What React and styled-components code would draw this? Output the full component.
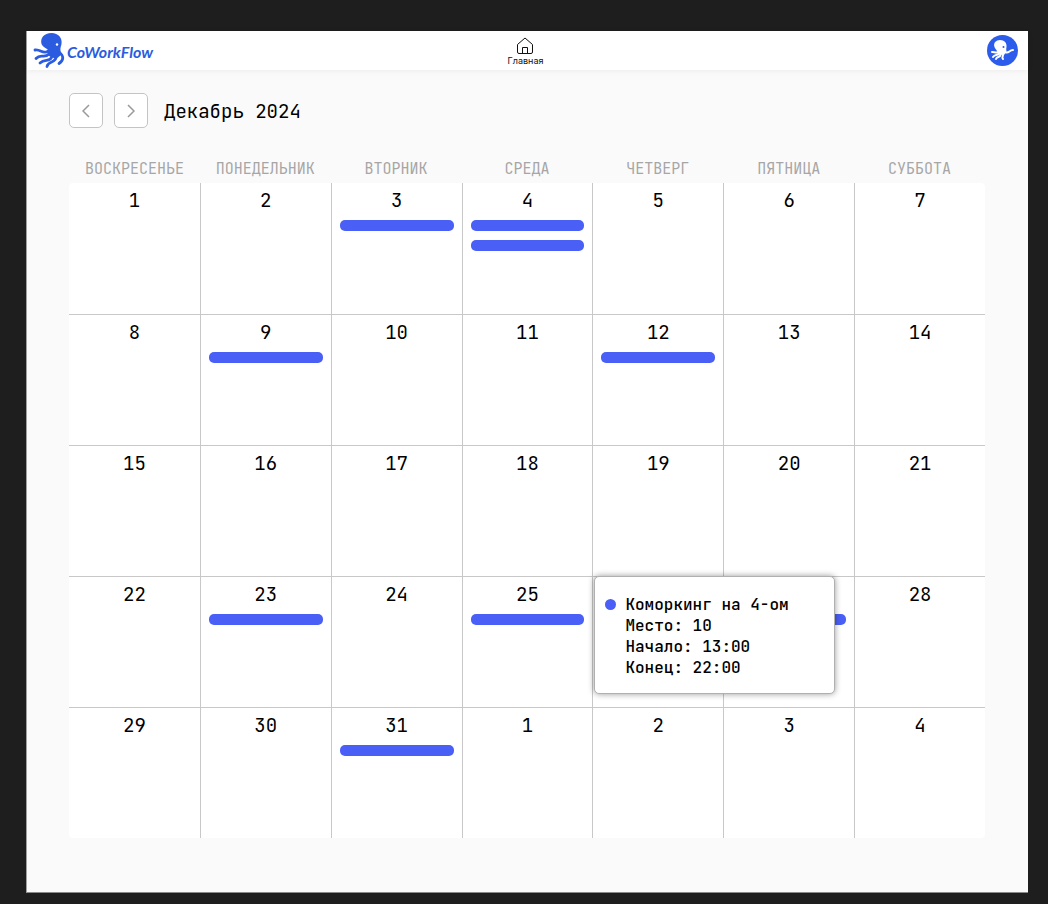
import React from "react";
import styled, { createGlobalStyle } from "styled-components";

const BLUE = "#2b5ce0";
const EVENT = "#4a5ff5";
const MONO = `"JetBrains Mono", "DejaVu Sans Mono", monospace`;

const GlobalStyle = createGlobalStyle`
  *, *::before, *::after { box-sizing: border-box; }
  body { margin: 0; background: #1e1e1e; color: #000; font-family: ${MONO}; }
`;

const Desktop = styled.div`
  min-height: 100vh;
  padding: 31px 20px 12px 26px;
  display: flex;
`;

const Page = styled.div`
  flex: 1;
  min-width: 0;
  display: flex;
  flex-direction: column;
  background: #fafafa;
  border-left: 1px solid #a0a0a0;
  border-bottom: 1px solid #8a8a8a;
`;

const Header = styled.header`
  height: 39px;
  display: grid;
  grid-template-columns: 1fr auto 1fr;
  align-items: center;
  padding: 0 10px 0 6px;
  background: #fff;
  box-shadow: 0 1px 6px rgba(0, 0, 0, 0.06);
`;

const Brand = styled.a`
  display: flex;
  align-items: center;
  gap: 2px;
  color: ${BLUE};
  text-decoration: none;
  font: italic 700 16px/20px Lato, sans-serif;
`;

const BrandName = styled.span`
  padding-top: 3px;
`;

const HomeLink = styled.a`
  display: flex;
  flex-direction: column;
  align-items: center;
  padding-top: 2px;
  color: #111;
  text-decoration: none;
  font: 400 9px/12px Inter, sans-serif;
`;

const Profile = styled.button`
  justify-self: end;
  width: 31px;
  height: 31px;
  padding: 0;
  display: grid;
  place-items: center;
  border: 0;
  border-radius: 50%;
  background: #2b5ceb;
  color: #fff;
`;

const Main = styled.main`
  padding: 23px 43px 54px 42px;
`;

const Toolbar = styled.div`
  display: flex;
  align-items: center;
  gap: 11px;
`;

const ArrowButton = styled.button`
  width: 34px;
  height: 35px;
  padding: 0;
  display: grid;
  place-items: center;
  border: 1px solid #c4c4c4;
  border-radius: 5px;
  background: #fff;
  color: #999;
`;

const Title = styled.h1`
  margin: 2px 0 0 5px;
  font-size: 19px;
  line-height: 24px;
  font-weight: 400;
`;

const Calendar = styled.table`
  width: 100%;
  margin-top: 26px;
  table-layout: fixed;
  border-collapse: separate;
  border-spacing: 0;
`;

const Weekday = styled.th`
  height: 29px;
  padding: 0;
  color: #a6a6a6;
  font-size: 15px;
  line-height: 20px;
  font-weight: 400;
  text-transform: uppercase;
`;

const Day = styled.td`
  position: relative;
  height: 131px;
  padding: 6px 8px;
  vertical-align: top;
  text-align: center;
  background: #fff;
  border-left: 1px solid #c8c8c8;
  border-top: 1px solid #c8c8c8;

  &:first-child { border-left: 0; }
  tr:first-child > & { border-top: 0; }
  tr:first-child > &:first-child { border-top-left-radius: 4px; }
  tr:first-child > &:last-child { border-top-right-radius: 4px; }
  tr:last-child > &:first-child { border-bottom-left-radius: 4px; }
  tr:last-child > &:last-child { border-bottom-right-radius: 4px; }
`;

const DayNumber = styled.div`
  font-size: 19px;
  line-height: 24px;
  visibility: ${({ $covered }) => ($covered ? "hidden" : "visible")};
`;

const Events = styled.div`
  display: flex;
  flex-direction: column;
  gap: 9px;
  padding-top: 7px;
`;

const EventBar = styled.button`
  width: 100%;
  height: 11px;
  padding: 0;
  border: 0;
  border-radius: 5px;
  background: ${EVENT};
`;

const Tooltip = styled.div`
  position: absolute;
  z-index: 2;
  top: -1px;
  left: 1px;
  width: 241px;
  padding: 17px 10px 15px;
  display: flex;
  gap: 9px;
  border: 1px solid #b0b0b0;
  border-radius: 5px;
  background: #fff;
  box-shadow: 0 0 6px rgba(0, 0, 0, 0.4);
  text-align: left;
  white-space: nowrap;
  font-size: 16px;
  line-height: 21px;
  font-weight: 500;
`;

const Dot = styled.span`
  flex: none;
  width: 11px;
  height: 11px;
  margin-top: 5px;
  border-radius: 50%;
  background: ${EVENT};
`;

const LogoOctopus = () => (
  <svg width="32" height="36" viewBox="0 0 32 36" fill="none" aria-hidden="true">
    <path
      fill="currentColor"
      d="M8.500 11C7 5 11 0 18.500 0c7 0 11 5 10 11-.3 2-1.500 4-1 6.500L28 22l-5 4-7-3-2-4c4-3-3-3-5.500-8Z"
    />
    <g stroke="currentColor" strokeWidth="2.800" strokeLinecap="round">
      <path d="M15 18c-5 4-7-2-13-1" />
      <path d="M16 21c-5 5-8-1-13 4.500" />
      <path d="M19 23c-2 7-7 2-12 7" />
      <path d="M23 24c0 6-8 4-9 9.500" />
      <path d="M26 19c5 4 5 8 0 11.500" />
    </g>
    <circle cx="24" cy="11.500" r="1.200" fill="#fff" />
  </svg>
);

const AvatarOctopus = () => (
  <svg width="31" height="31" viewBox="0 0 31 31" fill="none" aria-hidden="true">
    <path
      fill="currentColor"
      d="M7.500 12C6 8 9 5 13 5c4.500 0 7 3 6.500 7-.2 1.500-.5 2.500 0 4l-2 3.500h-5l-2.500-2c1-2-1.500-2.500-2.500-5.500Z"
    />
    <g stroke="currentColor" strokeWidth="2" strokeLinecap="round">
      <path d="M13 16c-3 3-5 1-8 1" />
      <path d="M13 18c-3 3-5 1-7 4" />
      <path d="M14 19c-1 4-4 2-5 5" />
      <path d="M16 18c1 3-2 4 0 6" />
      <path d="M18 17c4 2 4-2 8-2" />
    </g>
    <circle cx="16.500" cy="12" r="1" fill="#2b5ceb" />
  </svg>
);

const weekdays = ["Воскресенье", "Понедельник", "Вторник", "Среда", "Четверг", "Пятница", "Суббота"];
const weeks = [
  [1, 2, 3, 4, 5, 6, 7],
  [8, 9, 10, 11, 12, 13, 14],
  [15, 16, 17, 18, 19, 20, 21],
  [22, 23, 24, 25, 26, 27, 28],
  [29, 30, 31, 1, 2, 3, 4],
];
const events = { "0-2": 1, "0-3": 2, "1-1": 1, "1-4": 1, "3-1": 1, "3-3": 1, "3-5": 1, "4-2": 1 };
// Days that lie under the open tooltip
const covered = [26, 27];

export default function App() {
  return (
    <Desktop>
      <GlobalStyle />
      <Page>
        <Header>
          <Brand href="#"><LogoOctopus /><BrandName>CoWorkFlow</BrandName></Brand>
          <HomeLink href="#">
            <svg width="16" height="18" viewBox="0 0 16 18" fill="none" stroke="currentColor" strokeLinejoin="round" aria-hidden="true">
              <path d="M.5 7.500 8 1l7.500 6.500V15A1.500 1.500 0 0 1 14 16.500H2A1.500 1.500 0 0 1 .5 15ZM5.500 16.500v-6h5v6" />
            </svg>
            Главная
          </HomeLink>
          <Profile aria-label="Профиль"><AvatarOctopus /></Profile>
        </Header>
        <Main>
          <Toolbar>
            <ArrowButton aria-label="Предыдущий месяц">
              <svg width="8" height="14" viewBox="0 0 8 14" fill="none" stroke="currentColor" strokeWidth="1.500"><path d="M7 1 1 7l6 6" /></svg>
            </ArrowButton>
            <ArrowButton aria-label="Следующий месяц">
              <svg width="8" height="14" viewBox="0 0 8 14" fill="none" stroke="currentColor" strokeWidth="1.500"><path d="m1 1 6 6-6 6" /></svg>
            </ArrowButton>
            <Title>Декабрь 2024</Title>
          </Toolbar>
          <Calendar>
            <thead>
              <tr>{weekdays.map((d) => <Weekday key={d} scope="col">{d}</Weekday>)}</tr>
            </thead>
            <tbody>
              {weeks.map((week, w) => (
                <tr key={w}>
                  {week.map((day, d) => (
                    <Day key={d}>
                      <DayNumber $covered={covered.includes(day)}>{day}</DayNumber>
                      <Events>
                        {Array.from({ length: events[`${w}-${d}`] || 0 }, (_, i) => (
                          <EventBar key={i} aria-label={`Событие ${i + 1}`} />
                        ))}
                      </Events>
                      {w === 3 && d === 4 && (
                        <Tooltip role="tooltip">
                          <Dot />
                          <div>
                            <div>Коморкинг на 4-ом</div>
                            <div>Место: 10</div>
                            <div>Начало: 13:00</div>
                            <div>Конец: 22:00</div>
                          </div>
                        </Tooltip>
                      )}
                    </Day>
                  ))}
                </tr>
              ))}
            </tbody>
          </Calendar>
        </Main>
      </Page>
    </Desktop>
  );
}
